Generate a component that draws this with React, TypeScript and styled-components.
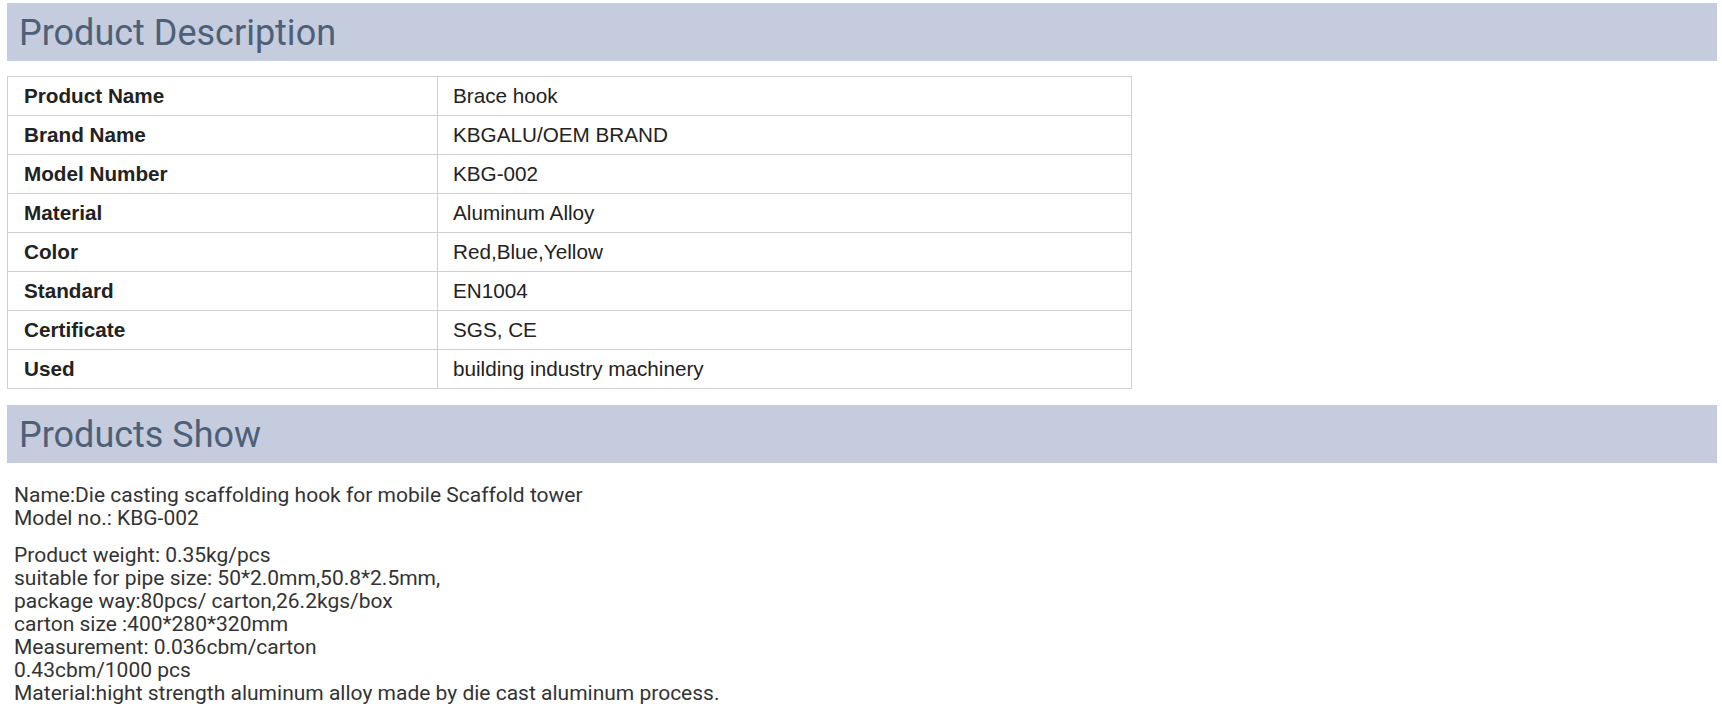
import React from "react";
import styled, { createGlobalStyle } from "styled-components";

const Global = createGlobalStyle`
  html, body { margin: 0; padding: 0; background: #ffffff; }
  body { font-family: Roboto, "Liberation Sans", Arial, sans-serif; }
`;

const Page = styled.div`
  padding: 3px 5px 0 7px;
  display: flex;
  flex-direction: column;
`;

const SectionBar = styled.h2<{ $gap?: number }>`
  margin: ${(p) => p.$gap ?? 0}px 0 0 0;
  height: 58px;
  box-sizing: border-box;
  background: #c5ccdd;
  color: #4e5f78;
  font-family: Roboto, "Liberation Sans", Arial, sans-serif;
  font-weight: 400;
  font-size: 36px;
  line-height: 55px;
  padding: 3px 0 0 12px;
`;

const Table = styled.table`
  margin-top: 15px;
  width: 1125px;
  border-collapse: collapse;
  font-family: "Liberation Sans", Arial, sans-serif;
  font-size: 20.7px;
  color: #222222;
  border: 1px solid #cfcfcf;
`;

const Row = styled.tr`
  height: 39px;
`;

const Cell = styled.td<{ $label?: boolean }>`
  box-sizing: border-box;
  border: 1px solid #cfcfcf;
  padding: 0 0 0 ${(p) => (p.$label ? 16 : 15)}px;
  width: ${(p) => (p.$label ? "430px" : "auto")};
  font-weight: ${(p) => (p.$label ? 700 : 400)};
  vertical-align: middle;
  line-height: 24px;
`;

const Body = styled.div`
  padding: 21px 0 0 7px;
  font-family: Roboto, "Liberation Sans", Arial, sans-serif;
  font-size: 21px;
  line-height: 23px;
  color: #333333;
`;

const Para = styled.p`
  margin: 0 0 14px 0;
`;

const rows: [string, string][] = [
  ["Product Name", "Brace hook"],
  ["Brand Name", "KBGALU/OEM BRAND"],
  ["Model Number", "KBG-002"],
  ["Material", "Aluminum Alloy"],
  ["Color", "Red,Blue,Yellow"],
  ["Standard", "EN1004"],
  ["Certificate", "SGS, CE"],
  ["Used", "building industry machinery"],
];

export default function App() {
  return (
    <>
      <Global />
      <Page>
        <SectionBar>Product Description</SectionBar>
        <Table>
          <tbody>
            {rows.map(([k, v]) => (
              <Row key={k}>
                <Cell $label>{k}</Cell>
                <Cell>{v}</Cell>
              </Row>
            ))}
          </tbody>
        </Table>
        <SectionBar $gap={16}>Products Show</SectionBar>
        <Body>
          <Para>
            Name:Die casting scaffolding hook for mobile Scaffold tower
            <br />
            Model no.: KBG-002
          </Para>
          <Para>
            Product weight: 0.35kg/pcs
            <br />
            suitable for pipe size: 50*2.0mm,50.8*2.5mm,
            <br />
            package way:80pcs/ carton,26.2kgs/box
            <br />
            carton size :400*280*320mm
            <br />
            Measurement: 0.036cbm/carton
            <br />
            0.43cbm/1000 pcs
            <br />
            Material:hight strength aluminum alloy made by die cast aluminum process.
          </Para>
        </Body>
      </Page>
    </>
  );
}
